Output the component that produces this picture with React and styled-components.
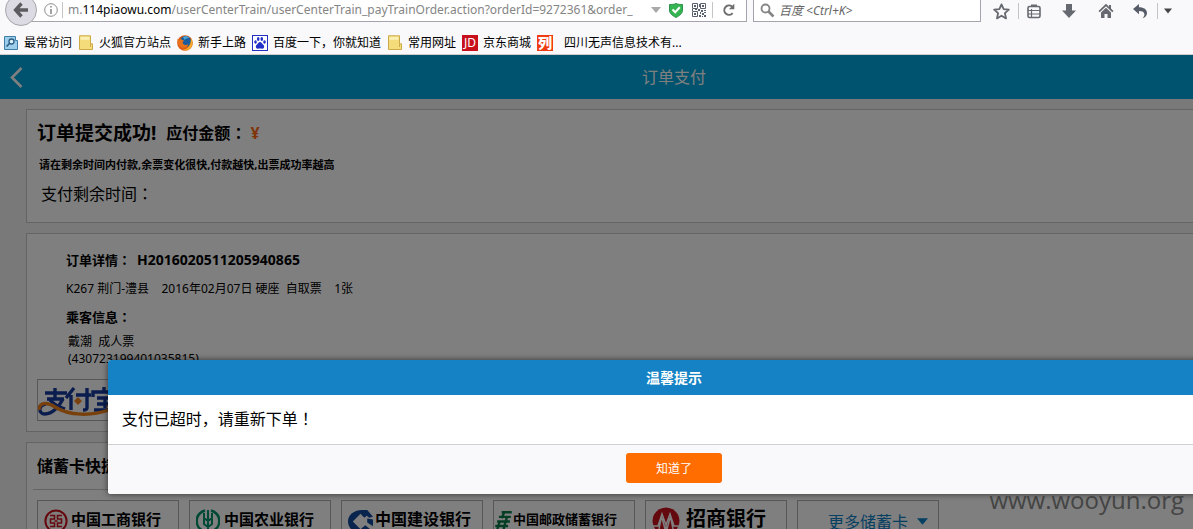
import React, { useState } from 'react';
import styled, { createGlobalStyle } from 'styled-components';

const GlobalStyle = createGlobalStyle`
  * {
    box-sizing: border-box;
  }

  body {
    margin: 0;
    overflow: hidden;
    font-family: "Noto Sans", "Noto Sans CJK SC", sans-serif;
    font-size: 12px;
    color: #000;
  }

  h1, h2, p {
    margin: 0;
  }

  button, input {
    font-family: inherit;
  }
`;

const Browser = styled.div`
  display: flex;
  flex-direction: column;
  height: 100vh;
`;

// Browser toolbar
const Chrome = styled.header`
  flex: none;
  background-color: #f9f8fa;
  border-bottom: 1px solid #d0cccc;
`;

const NavRow = styled.div`
  display: flex;
  align-items: stretch;
  height: 22px;
`;

const IconButton = styled.button`
  display: flex;
  align-items: center;
  justify-content: center;
  flex: none;
  width: ${(props) => props.$width || 36}px;
  height: 20px;
  padding: 0;
  border: none;
  background: none;
  cursor: pointer;
`;

const BackButton = styled(IconButton)`
  width: 32px;
  height: 32px;
  margin: -6px -6px 0 5px;
  border: 1px solid #a9a7ad;
  border-radius: 50%;
  background-color: #dcdae2;
  z-index: 1;
`;

const AddressBar = styled.div`
  display: flex;
  align-items: center;
  flex: 1;
  min-width: 0;
  padding: 0 1px 1px 8px;
  background-color: #fff;
  border: 1px solid #a5a3ad;
  border-top: none;
`;

const Separator = styled.span`
  flex: none;
  width: 1px;
  height: 16px;
  background-color: #c4c4c4;
`;

const Url = styled.div`
  flex: 1;
  min-width: 0;
  margin-left: 5px;
  overflow: hidden;
  white-space: nowrap;
  font-size: 12px;
  line-height: 20px;
  color: #858585;

  b {
    font-weight: 400;
    color: #000;
  }
`;

const SearchBox = styled.label`
  display: flex;
  align-items: center;
  gap: 4px;
  flex: none;
  width: 228px;
  margin: 0 3px 0 6px;
  padding: 0 6px 1px;
  background-color: #fff;
  border: 1px solid #a5a3ad;
  border-top: none;
`;

const SearchInput = styled.input`
  flex: 1;
  min-width: 0;
  padding: 0;
  border: none;
  outline: none;
  font-size: 12px;
  background: none;

  &::placeholder {
    color: #666;
    font-style: italic;
    opacity: 1;
  }
`;

const Tools = styled.div`
  display: flex;
  align-items: center;
  flex: none;
`;

const Bookmarks = styled.nav`
  display: flex;
  align-items: center;
  gap: 6px;
  height: 32px;
  padding: 9px 3px 0;
`;

const Bookmark = styled.a`
  display: flex;
  align-items: center;
  gap: ${(props) => (props.$wide ? 11 : 5)}px;
  color: #000;
  line-height: 16px;
  white-space: nowrap;
  text-decoration: none;
`;

// Page
const Viewport = styled.main`
  position: relative;
  flex: 1;
  min-height: 0;
  overflow: hidden;
`;

const Site = styled.div`
  position: relative;
  width: 113%;
  min-height: 100%;
  background-color: #f2f2f2;
`;

const TitleBar = styled.div`
  display: grid;
  grid-template-columns: 32px 1fr 32px;
  align-items: center;
  height: 44px;
  background-color: #00a6dc;
  color: #fff;
`;

const PageTitle = styled.h1`
  font-size: 16px;
  font-weight: 400;
  line-height: 24px;
  text-align: center;
`;

const Cards = styled.div`
  display: flex;
  flex-direction: column;
  gap: 10px;
  padding: 10px 26px;
`;

const Card = styled.section`
  padding: 10px;
  background-color: #fff;
  background-clip: padding-box;
  border: 1px solid #c8c8c8;
`;

// full-width punctuation centred in its cell
const Mark = styled.span`
  font-family: "Noto Sans CJK JP", sans-serif;
  line-height: 1;
`;

const Amount = styled.div`
  display: flex;
  align-items: center;
  gap: 10px;
  font-size: 16px;
  font-weight: 700;
  line-height: 26px;

  h2 {
    font-size: 19px;
  }
`;

const Price = styled.span`
  margin-left: 4px;
  color: #ff6a10;
`;

const Hint = styled.p`
  padding: 10px 2px 8px;
  font-size: 11px;
  font-weight: 700;
  line-height: 18px;
`;

const Remaining = styled.p`
  padding: 0 4px 6px;
  font-size: 16px;
  line-height: 24px;
`;

const Details = styled.div`
  padding: 4px 29px 0;
`;

const DetailTitle = styled.h2`
  display: flex;
  gap: 6px;
  font-size: 13px;
  line-height: 24px;
`;

const OrderNumber = styled.span`
  font-size: 14px;
`;

const DetailLine = styled.p`
  padding: 8px 0 7px;
  font-size: 12px;
  line-height: 18px;
  white-space: pre;
`;

const Passenger = styled.p`
  padding: 4px 2px 12px;
  font-size: 12px;
  line-height: 17px;
  white-space: pre;
`;

const CardTitle = styled.h2`
  margin: 0 -4px 10px;
  padding: 0 4px 10px;
  border-bottom: 1px solid #c8c8c8;
  font-size: 16px;
  line-height: 26px;
`;

const Methods = styled.div`
  display: flex;
  flex-wrap: wrap;
  gap: 10px;
`;

const Method = styled.button`
  display: flex;
  align-items: center;
  justify-content: flex-start;
  gap: ${(props) => props.$gap || 3}px;
  width: 142px;
  height: 42px;
  padding: 0 ${(props) => (props.$tight ? 1 : 6)}px;
  background: none;
  border: 1px solid #b4aeb8;
  color: #000;
  white-space: nowrap;
  cursor: pointer;

  svg {
    flex: none;
  }
`;

const AlipayMethod = styled(Method)`
  padding: 0;
`;

const BankName = styled.span`
  display: flex;
  flex-direction: column;
  align-items: flex-start;
  padding: ${(props) => (props.$hasSub ? '6px 0 0' : '0 0 4px')};
  font-size: ${(props) => props.$size || 15}px;
  font-weight: 700;
  line-height: 18px;

  small {
    font-size: 7px;
    font-weight: 400;
    line-height: 10px;
  }
`;

const MoreMethod = styled(Method)`
  justify-content: flex-end;
  padding-right: 10px;
  font-size: 16px;
  color: #0a80c4;
`;

const Overlay = styled.div`
  position: absolute;
  inset: 0;
  background-color: rgba(0, 0, 0, 0.5);
`;

// Dialog
const Dialog = styled.div`
  position: absolute;
  top: 305px;
  left: 8%;
  right: 8%;
  overflow: hidden;
  border-radius: 3px;
  background-color: #fff;
  box-shadow: 0 0 6px rgba(0, 0, 0, 0.6);
`;

const DialogTitle = styled.h2`
  background-color: #1482c4;
  color: #fff;
  font-size: 14px;
  line-height: 35px;
  text-align: center;
`;

const DialogBody = styled.p`
  padding: 12px 14px 13px;
  font-size: 16px;
  line-height: 24px;
`;

const DialogFooter = styled.div`
  display: flex;
  justify-content: center;
  padding: 8px 0 11px;
  background-color: #f9f8fa;
  border-top: 1px solid #d0d0d0;
`;

const ConfirmButton = styled.button`
  width: 96px;
  height: 30px;
  padding: 0;
  border: none;
  border-radius: 3px;
  background-color: #ff6c00;
  color: #fff;
  font-size: 12px;
  cursor: pointer;
`;

const Watermark = styled.div`
  position: absolute;
  right: 9px;
  bottom: 13px;
  color: #444;
  font-family: "Open Sans", sans-serif;
  font-size: 24px;
  line-height: 32px;
`;

const BackIcon = () => (
  <svg width="16" height="16" viewBox="0 0 16 16" fill="none" stroke="#5c5c60" strokeWidth="3.4">
    <path d="M8.5 1.5L2.6 8l5.9 6.5M3 8h12" />
  </svg>
);

const InfoIcon = () => (
  <svg width="14" height="14" viewBox="0 0 14 14" fill="none" stroke="#8c8c8c">
    <circle cx="7" cy="7" r="6.3" />
    <path d="M7 6v5M7 3v1.6" strokeWidth="1.6" />
  </svg>
);

const ShieldIcon = () => (
  <svg width="14" height="16" viewBox="0 0 14 16">
    <path d="M.5 2.5C3 2.5 5 2.500 7 1.500c2 1 4 1 6.500 1V8c0 3.500-3 5.800-6.500 7.400C3.500 13.800.5 11.500.5 8z" fill="#35b552" stroke="#2c9248" />
    <path d="M3.500 7.500l2.700 2.800 4.600-5" fill="none" stroke="#fff" strokeWidth="2" />
  </svg>
);

const QrIcon = () => (
  <svg width="14" height="14" viewBox="0 0 14 14">
    <g fill="none" stroke="#5a606c">
      <path d="M.5.5h5v5h-5zM8.500.5h5v5h-5zM.5 8.500h5v5h-5z" />
    </g>
    <path d="M2 2h2v2H2zM10 2h2v2h-2zM2 10h2v2H2zM7 1h1v3H7zM6 6h2v2H6zM9 7h2v2H9zM12 7h2v1h-2zM8 9h1v2H8zM10 10h2v2h-2zM12 9h2v1h-2zM7 12h2v2H7zM12 12h2v2h-2zM10 13h1v1h-1zM0 6h1v2H0zM3 6h2v1H3z" fill="#5a606c" />
  </svg>
);

const ReloadIcon = () => (
  <svg width="14" height="14" viewBox="0 0 14 14">
    <path d="M10.600 10.200A4.700 4.700 0 1 1 10 3.500" fill="none" stroke="#6e6e6e" strokeWidth="2" />
    <path d="M12.300.8v5.400H6.900z" fill="#6e6e6e" />
  </svg>
);

const SearchIcon = () => (
  <svg width="15" height="15" viewBox="0 0 15 15" fill="none" stroke="#858585">
    <circle cx="5.500" cy="5.500" r="4" strokeWidth="1.800" />
    <path d="M8.500 8.500l5 5" strokeWidth="2.600" />
  </svg>
);

const StarIcon = () => (
  <svg width="17" height="17" viewBox="0 0 16 16">
    <path d="M8 1.300l2 4.500 4.900.5-3.700 3.300 1.100 4.900L8 12l-4.300 2.500 1.100-4.900L1.100 6.300 6 5.800z" fill="none" stroke="#666a70" strokeWidth="1.700" strokeLinejoin="round" />
  </svg>
);

const ListIcon = () => (
  <svg width="16" height="16" viewBox="0 0 16 16">
    <rect x="2" y="3.500" width="12" height="11" rx="1.500" fill="none" stroke="#666a70" strokeWidth="1.600" />
    <path d="M5 4V1.500h6V4z" fill="#666a70" />
    <path d="M2 7.500h12M2 11h12M5.500 6v8" stroke="#666a70" strokeWidth="1.200" />
  </svg>
);

const DownloadIcon = () => (
  <svg width="16" height="16" viewBox="0 0 16 16">
    <path d="M5 1h6v6.500h4L8 15 1 7.500h4z" fill="#666a70" />
  </svg>
);

const HomeIcon = () => (
  <svg width="16" height="16" viewBox="0 0 16 16" fill="#666a70">
    <path d="M8 .8L.5 8l1.200 1.200L8 3.300l6.300 5.900L15.500 8 13 5.500V2h-2v1.700z" />
    <path d="M8 4.800l5 4.600V15H9.500v-4h-3v4H3V9.400z" />
  </svg>
);

const UndoIcon = () => (
  <svg width="16" height="16" viewBox="0 0 16 16">
    <path d="M1 6l6-5v3.200c5 0 8 2.300 8 5.800 0 2.700-1.600 4.500-4.500 5.200 1.300-1.200 1.900-2.300 1.900-3.600C12.400 9 10.500 8 7 8v3.200z" fill="#565c68" />
  </svg>
);

const Triangle = ({ size = 8, color = '#444' }) => (
  <svg width={size} height={size} viewBox="0 0 10 10">
    <path d="M0 2h10L5 8z" fill={color} />
  </svg>
);

const MostVisitedIcon = () => (
  <svg width="16" height="16" viewBox="0 0 16 16">
    <path d="M1.500 1.500h11v4h2v9h-13z" fill="#9ccdea" stroke="#3f7ea8" />
    <circle cx="8.500" cy="6.500" r="2.500" fill="#d9effa" stroke="#2b5d85" strokeWidth="1.300" />
    <path d="M6.700 8.300L3.500 11.500" stroke="#2b5d85" strokeWidth="1.600" />
  </svg>
);

const FolderIcon = () => (
  <svg width="16" height="16" viewBox="0 0 16 16">
    <path d="M1.500.8h11v8h2v5.700h-13z" fill="#f4dc7a" stroke="#cdaa48" />
    <path d="M2.500 1.800h9v3h-9z" fill="#fbf0b4" />
    <path d="M12.500 9v3" stroke="#cdaa48" />
  </svg>
);

const FirefoxIcon = () => (
  <svg width="16" height="16" viewBox="0 0 16 16">
    <circle cx="8" cy="8" r="7.800" fill="#dd5a14" />
    <circle cx="8.500" cy="6.500" r="5.600" fill="#1b5c9e" />
    <path d="M6 2c2-1.500 5-1 6.500 1-2 0-4 .4-5 2z" fill="#49a7d8" />
    <path d="M.7 3.500L2.500 5 4 3.500c.5 1.500 1.500 1.700 3 2L5.500 7.500c1 3 4 3 6 1.500-1 4-5.500 5-8.500 2.500C.5 9.500 0 6 .7 3.500z" fill="#e8721c" />
    <path d="M14 3c2.500 4 2 9-2 11.500-2 1.200-5 1.400-7 .3 5 .2 9-3.800 9-11.800z" fill="#f4a92b" />
  </svg>
);

const BaiduIcon = () => (
  <svg width="16" height="16" viewBox="0 0 16 16">
    <rect x=".5" y=".5" width="15" height="15" fill="#fff" stroke="#2330c8" />
    <g fill="#2330c8">
      <ellipse cx="3.500" cy="7" rx="1.300" ry="1.800" />
      <ellipse cx="6.200" cy="4" rx="1.300" ry="1.900" />
      <ellipse cx="9.800" cy="4" rx="1.300" ry="1.900" />
      <ellipse cx="12.500" cy="7" rx="1.300" ry="1.800" />
      <path d="M8 7c1.500 0 2 1.500 3 2.500 1.200 1.200 1.500 2 .9 3.200-.8 1.400-2.400.8-3.900.8s-3.100.6-3.900-.8c-.6-1.200-.3-2 .9-3.200C6 8.500 6.500 7 8 7z" />
    </g>
  </svg>
);

const BadgeIcon = styled.span`
  width: 16px;
  height: 16px;
  background-color: ${(props) => props.$color};
  color: #fff;
  font-size: ${(props) => props.$size}px;
  font-weight: ${(props) => props.$weight};
  line-height: 16px;
  text-align: center;
`;

const ChevronIcon = () => (
  <svg width="32" height="24" viewBox="0 0 32 24" fill="none" stroke="#fff" strokeWidth="2.600">
    <path d="M21.500 3L12 12.500l9.500 9.500" />
  </svg>
);

const AlipayLogo = () => (
  <svg width="138" height="40" viewBox="0 0 138 40">
    <g fill="none" stroke="#163a9c" strokeWidth="3.400">
      <path d="M7 13h22M17 8v10M9 19h17M25 19C21 27 14 34 7 34c-7 0-7-9 1-10M12 20c4 5 9 7 15 9" />
      <path d="M36 8l-8 10M33 15v15M38 15h15M49 8v20q0 2-4 2" />
      <path d="M55 17v-5h22v5M66 7v4M59 18h16M67 18v10M59 24h16M56 30h21" />
    </g>
    <path d="M1 30c0-8 8-8 16-3 14 9 37 9 54 3" fill="none" stroke="#f08018" strokeWidth="3.400" />
    <path d="M40 17l4 4-4 4-4-4zM71 24l3 2-3 2-3-2z" fill="#f58220" />
  </svg>
);

const IcbcLogo = () => (
  <svg width="24" height="24" viewBox="0 0 24 24" fill="none" stroke="#c8141e">
    <circle cx="12" cy="12" r="10.600" strokeWidth="2" />
    <path d="M6 6.500h4.500v3.500H6.500v4h4v3.500H6M18 6.500h-4.500v3.500h4v4h-4v3.500H18M10.500 12h3" strokeWidth="1.600" />
  </svg>
);

const AbcLogo = () => (
  <svg width="24" height="24" viewBox="0 0 24 24" fill="none" stroke="#00936e">
    <path d="M9 1.500C-2 5-2 19 9 22.500M15 1.500c11 3.500 11 17.500 0 21" strokeWidth="2.400" />
    <path d="M12 1v22M8 4v5l4 3 4-3V4M8 10v5l4 3 4-3v-5" strokeWidth="2" />
  </svg>
);

const CcbLogo = () => (
  <svg width="25" height="25" viewBox="0 0 26 26">
    <path d="M15 1C5 1 0 7 0 13s5 12 13 12c4 0 8-1.500 10-4l-5-4-5 4-8-8 8-8 4 4 5-4c-1-2-4-4-7-4z" fill="#124a9c" />
    <path d="M13 1h7l6 7-4 1-6-5zM20 10l6 1v7l-6-4z" fill="#124a9c" />
    <path d="M13 7l6 6-6 6-6-6z" fill="#fff" />
  </svg>
);

const PostLogo = () => (
  <svg width="17" height="22" viewBox="0 0 18 24" fill="none" stroke="#0a7d4b" strokeWidth="2.600">
    <path d="M7 2.500h11M4 7.500h13M2 12.500h14M0 17.500h14M10 2L7 9M5 12L2 22M13 7l-2 7M11 13l-2 9" />
  </svg>
);

const CmbLogo = () => (
  <svg width="28" height="28" viewBox="0 0 28 28">
    <circle cx="14" cy="14" r="13.500" fill="#c8141e" />
    <path d="M1 19h5l4-12 4 11 4-11 4 12h5M10 7L7 22M18 7l3 15M14 18v4M10 11l3 11M18 11l-3 11" fill="none" stroke="#fff" strokeWidth="1.500" />
  </svg>
);

const bookmarks = [
  { name: '最常访问', icon: <MostVisitedIcon /> },
  { name: '火狐官方站点', icon: <FolderIcon /> },
  { name: '新手上路', icon: <FirefoxIcon /> },
  { name: '百度一下，你就知道', icon: <BaiduIcon /> },
  { name: '常用网址', icon: <FolderIcon /> },
  { name: '京东商城', icon: <BadgeIcon $color="#c8101c" $size={12} $weight={400}>JD</BadgeIcon> },
  { name: '四川无声信息技术有...', icon: <BadgeIcon $color="#f03a10" $size={14} $weight={900}>列</BadgeIcon>, wide: true },
];

const banks = [
  { name: '中国工商银行', logo: <IcbcLogo /> },
  { name: '中国农业银行', logo: <AbcLogo />, gap: 4 },
  { name: '中国建设银行', logo: <CcbLogo />, size: 16, gap: 2, sub: 'China Construction Bank' },
  { name: '中国邮政储蓄银行', logo: <PostLogo />, size: 13, gap: 1, tight: true, sub: 'POSTAL SAVINGS BANK OF CHINA' },
  { name: '招商银行', logo: <CmbLogo />, size: 20, gap: 6 },
];

const BrowserChrome = () => (
  <Chrome>
    <NavRow>
      <BackButton aria-label="后退"><BackIcon /></BackButton>
      <AddressBar>
        <IconButton $width={22} aria-label="站点信息"><InfoIcon /></IconButton>
        <Separator />
        <Url role="textbox" aria-label="网址">
          m.<b>114piaowu.com</b>/userCenterTrain/userCenterTrain_payTrainOrder.action?orderId=9272361&amp;order_
        </Url>
        <IconButton $width={20} aria-label="历史记录"><Triangle size={10} color="#a8a8a8" /></IconButton>
        <IconButton $width={20} aria-label="安全"><ShieldIcon /></IconButton>
        <IconButton $width={26} aria-label="二维码"><QrIcon /></IconButton>
        <Separator />
        <IconButton $width={32} aria-label="刷新"><ReloadIcon /></IconButton>
      </AddressBar>
      <SearchBox>
        <SearchIcon />
        <SearchInput type="text" aria-label="搜索" placeholder="百度 <Ctrl+K>" />
      </SearchBox>
      <Tools>
        <IconButton $width={34} aria-label="收藏"><StarIcon /></IconButton>
        <Separator />
        <IconButton $width={30} aria-label="书签"><ListIcon /></IconButton>
        <IconButton $width={40} aria-label="下载"><DownloadIcon /></IconButton>
        <IconButton $width={34} aria-label="主页"><HomeIcon /></IconButton>
        <IconButton $width={34} aria-label="撤销"><UndoIcon /></IconButton>
        <Separator />
        <IconButton $width={20} aria-label="更多"><Triangle /></IconButton>
      </Tools>
      <IconButton $width={15} aria-label="菜单" />
    </NavRow>
    <Bookmarks>
      {bookmarks.map((item) => (
        <Bookmark key={item.name} href="#" $wide={item.wide}>
          {item.icon}
          {item.name}
        </Bookmark>
      ))}
    </Bookmarks>
  </Chrome>
);

const OrderPage = () => (
  <>
    <TitleBar>
      <IconButton $width={32} aria-label="返回"><ChevronIcon /></IconButton>
      <PageTitle>订单支付</PageTitle>
    </TitleBar>
    <Cards>
      <Card>
        <Amount>
          <h2>订单提交成功!</h2>
          <div>应付金额<Mark>：</Mark><Price>¥</Price></div>
        </Amount>
        <Hint>请在剩余时间内付款,余票变化很快,付款越快,出票成功率越高</Hint>
        <Remaining>支付剩余时间<Mark>：</Mark></Remaining>
      </Card>
      <Card>
        <Details>
          <DetailTitle>
            <span>订单详情<Mark>：</Mark></span>
            <OrderNumber>H2016020511205940865</OrderNumber>
          </DetailTitle>
          <DetailLine>{'K267 荆门-澧县    2016年02月07日 硬座  自取票    1张'}</DetailLine>
          <DetailTitle>
            <span>乘客信息<Mark>：</Mark></span>
          </DetailTitle>
          <Passenger>{'戴潮  成人票\n(430723199401035815)'}</Passenger>
        </Details>
        <AlipayMethod aria-label="支付宝"><AlipayLogo /></AlipayMethod>
      </Card>
      <Card>
        <CardTitle>储蓄卡快捷支付</CardTitle>
        <Methods>
          {banks.map((bank) => (
            <Method key={bank.name} $gap={bank.gap} $tight={bank.tight}>
              {bank.logo}
              <BankName $size={bank.size} $hasSub={Boolean(bank.sub)}>
                {bank.name}
                {bank.sub && <small>{bank.sub}</small>}
              </BankName>
            </Method>
          ))}
          <MoreMethod $gap={9}>更多储蓄卡 <Triangle size={11} color="#0a80c4" /></MoreMethod>
        </Methods>
      </Card>
    </Cards>
  </>
);

const App = () => {
  const [open, setOpen] = useState(true);

  return (
    <Browser>
      <GlobalStyle />
      <BrowserChrome />
      <Viewport>
        <Site>
          <OrderPage />
          {open && (
            <Overlay>
              <Dialog role="dialog" aria-labelledby="tip-title">
                <DialogTitle id="tip-title">温馨提示</DialogTitle>
                <DialogBody>支付已超时，请重新下单<Mark>！</Mark></DialogBody>
                <DialogFooter>
                  <ConfirmButton onClick={() => setOpen(false)}>知道了</ConfirmButton>
                </DialogFooter>
              </Dialog>
            </Overlay>
          )}
        </Site>
        <Watermark>www.wooyun.org</Watermark>
      </Viewport>
    </Browser>
  );
};

export default App;
